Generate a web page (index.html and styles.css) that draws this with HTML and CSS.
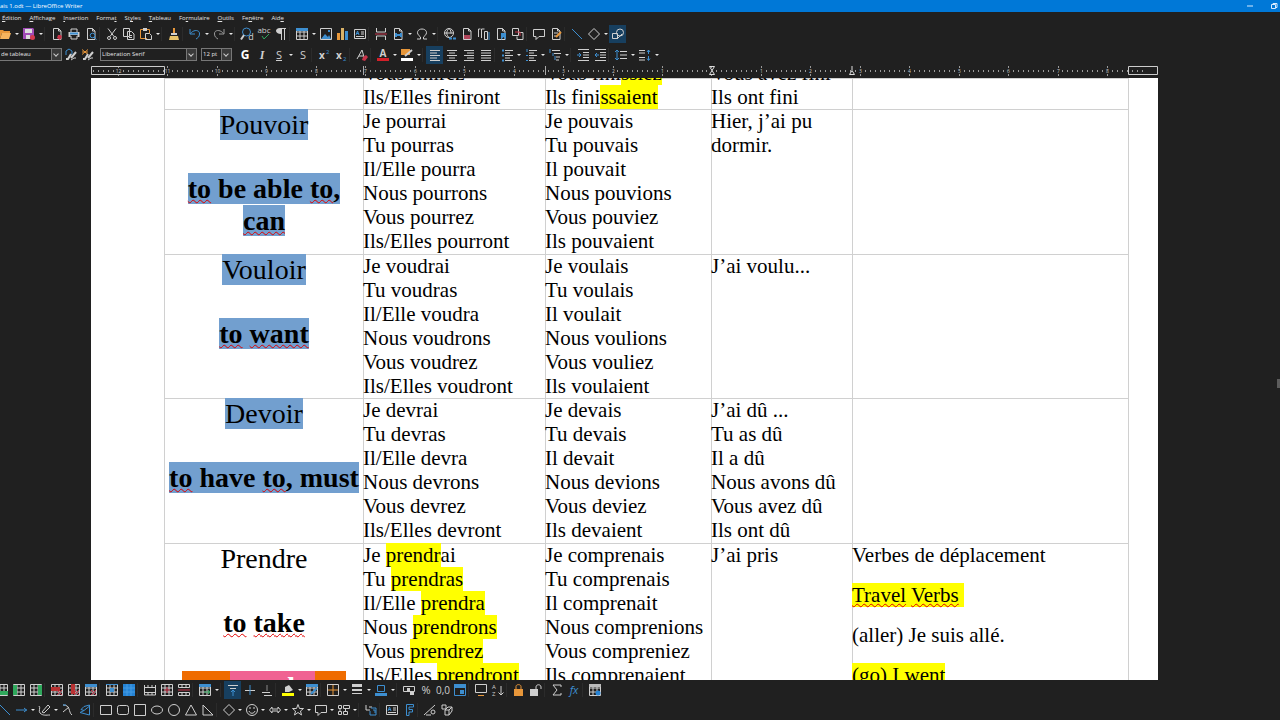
FILE: index.html
```html
<!DOCTYPE html>
<html lang="fr">
<head>
<meta charset="utf-8">
<title>ais 1.odt — LibreOffice Writer</title>
<link rel="stylesheet" href="styles.css">
</head>
<body>
<div class="app">
  <header class="titlebar">
    <span class="title">ais 1.odt — LibreOffice Writer</span>
    <button class="winbtn" aria-label="Réduire"><svg viewBox="0 0 8 8"><path d="M1 4h6" /></svg></button>
    <button class="winbtn" aria-label="Restaurer"><svg viewBox="0 0 8 8"><path d="M1.500 2.500h4v4h-4zM3 2.500v-1h4v4h-1" /></svg></button>
  </header>
  <nav class="menubar">
    <button><u>É</u>dition</button><button><u>A</u>ffichage</button><button><u>I</u>nsertion</button><button>Forma<u>t</u></button><button>St<u>y</u>les</button><button><u>T</u>ableau</button><button>Fo<u>r</u>mulaire</button><button><u>O</u>utils</button><button>Fe<u>n</u>être</button><button>Aid<u>e</u></button>
  </nav>
  <div class="toolbar main-tools" id="standard"></div>
  <div class="toolbar format-tools">
    <label class="combo style-combo"><select aria-label="Style de paragraphe"><option>de tableau</option></select></label>
    <div class="tools" id="styles"></div>
    <label class="combo font-combo"><select aria-label="Nom de police"><option>Liberation Serif</option></select></label>
    <label class="combo size-combo"><select aria-label="Taille de police"><option>12 pt</option></select></label>
    <div class="tools" id="formatting"></div>
  </div>
  <div class="ruler" id="ruler"></div>
  <main class="workspace">
    <article class="page">
      <table class="verbs">
        <colgroup><col class="c1"><col class="c2"><col class="c3"><col class="c4"><col class="c5"></colgroup>
        <tbody>
        <tr class="partial">
          <td></td>
          <td><div class="tail"><p>Vous finirez</p><p>Ils/Elles finiront</p></div></td>
          <td><div class="tail"><p>Vous fini<mark>ssiez</mark></p><p>Ils fini<mark>ssaient</mark></p></div></td>
          <td><div class="tail"><p>Vous avez fini</p><p>Ils ont fini</p></div></td>
          <td></td>
        </tr>
        <tr>
          <td class="verb"><p><span class="sel">Pouvoir</span></p><p class="blank"></p><p class="en"><span class="sel"><i>to</i> be able <i>to</i>,<br><i>can</i></span></p></td>
          <td><p>Je pourrai</p><p>Tu pourras</p><p>Il/Elle pourra</p><p>Nous pourrons</p><p>Vous pourrez</p><p>Ils/Elles pourront</p></td>
          <td><p>Je pouvais</p><p>Tu pouvais</p><p>Il pouvait</p><p>Nous pouvions</p><p>Vous pouviez</p><p>Ils pouvaient</p></td>
          <td><p>Hier, j’ai pu dormir.</p></td>
          <td></td>
        </tr>
        <tr>
          <td class="verb"><p><span class="sel">Vouloir</span></p><p class="blank"></p><p class="en"><span class="sel"><i>to</i> <i>want</i></span></p></td>
          <td><p>Je voudrai</p><p>Tu voudras</p><p>Il/Elle voudra</p><p>Nous voudrons</p><p>Vous voudrez</p><p>Ils/Elles voudront</p></td>
          <td><p>Je voulais</p><p>Tu voulais</p><p>Il voulait</p><p>Nous voulions</p><p>Vous vouliez</p><p>Ils voulaient</p></td>
          <td><p>J’ai voulu...</p></td>
          <td></td>
        </tr>
        <tr>
          <td class="verb"><p><span class="sel">Devoir</span></p><p class="blank"></p><p class="en"><span class="sel"><i>to</i> have <i>to</i>, must</span></p></td>
          <td><p>Je devrai</p><p>Tu devras</p><p>Il/Elle devra</p><p>Nous devrons</p><p>Vous devrez</p><p>Ils/Elles devront</p></td>
          <td><p>Je devais</p><p>Tu devais</p><p>Il devait</p><p>Nous devions</p><p>Vous deviez</p><p>Ils devaient</p></td>
          <td><p>J’ai dû ...</p><p>Tu as dû</p><p>Il a dû</p><p>Nous avons dû</p><p>Vous avez dû</p><p>Ils ont dû</p></td>
          <td></td>
        </tr>
        <tr>
          <td class="verb"><p>Prendre</p><p class="blank"></p><p class="en"><i>to</i> <i>take</i></p><p class="blank"></p><p class="strip"><span class="orange wide"></span><span class="pink">l</span><span class="orange">t</span></p></td>
          <td><p>Je <mark>prendr</mark>ai</p><p>Tu <mark>prendras</mark></p><p>Il/Elle <mark>prendra</mark></p><p>Nous <mark>prendrons</mark></p><p>Vous <mark>prendrez</mark></p><p>Ils/Elles <mark>prendront</mark></p></td>
          <td><p>Je comprenais</p><p>Tu comprenais</p><p>Il comprenait</p><p>Nous comprenions</p><p>Vous compreniez</p><p>Ils comprenaient</p></td>
          <td><p>J’ai pris</p></td>
          <td class="spaced"><p>Verbes de déplacement</p><p><mark><i>Travel</i> <i>Verbs</i>&nbsp;</mark></p><p>(aller) Je suis allé.</p><p><mark>(go) I went</mark></p></td>
        </tr>
        </tbody>
      </table>
    </article>
    <div class="scroll-thumb"></div>
  </main>
  <footer>
    <div class="toolbar table-tools" id="table"></div>
    <div class="toolbar draw-tools" id="drawing"></div>
  </footer>
</div>
<script src="app.js"></script>
</body>
</html>
```
FILE: styles.css
```css
* { box-sizing: border-box; }
body { margin: 0; background: #202020; color: #e4e4e4; font-family: "Open Sans", sans-serif; }
button { margin: 0; padding: 0; border: 0; background: none; color: inherit; font: inherit; }
svg { display: block; overflow: visible; }
.app { display: flex; flex-direction: column; height: 100vh; overflow: hidden; }

.titlebar { display: flex; align-items: center; height: 12px; background: #0078d7; color: #fff; gap: 16px; padding-right: 2px; flex: none; }
.title { flex: 1; font-size: 6px; line-height: 12px; }
.winbtn { width: 8px; height: 8px; }
.winbtn svg { width: 8px; height: 8px; fill: none; stroke: #d5eaff; }

.menubar { display: flex; align-items: center; gap: 8px; height: 12px; padding-left: 2px; font-size: 6px; line-height: 10px; flex: none; }
.menubar u { text-decoration-thickness: 1px; text-underline-offset: 1px; }

.toolbar { display: flex; align-items: center; flex: none; }
.tools { display: flex; align-items: center; }
.main-tools { height: 20px; margin-left: -4px; }
.format-tools { height: 21px; }
.table-tools { height: 20px; margin-left: -7px; }
.draw-tools { height: 20px; margin-left: -4px; }
.tool { width: 17px; height: 18px; display: grid; place-items: center; flex: none; }
.tool svg { width: 12px; height: 12px; }
.tool.active { background: #173f5f; }
.drop { width: 7px; height: 18px; display: grid; place-items: center; flex: none; }
.draw-tools .drop { width: 6px; }
.drop::after { content: ""; border: 2px solid transparent; border-top-color: #e8e8e8; border-bottom: 0; }
.sep { width: 4px; height: 14px; border-left: 1px solid #2b2b2b; flex: none; }

.combo { position: relative; display: block; height: 13px; border: 1px solid #777; flex: none; }
.combo select { appearance: none; width: 100%; height: 11px; margin: 0; padding: 0 10px 0 1px; border: 0; background: #202020; color: #e4e4e4; font: 6px/11px "Open Sans", sans-serif; display: block; }
.combo::before { content: ""; position: absolute; right: 0; top: 0; width: 9px; height: 11px; border-left: 1px solid #777; background: #3a3a3a; pointer-events: none; }
.combo::after { content: ""; position: absolute; right: 3px; top: 3px; width: 3px; height: 3px; border: solid #ccc; border-width: 0 1px 1px 0; transform: rotate(45deg); pointer-events: none; }
.style-combo { width: 62px; border-left: 0; }
.font-combo { width: 97px; margin-left: 4px; }
.size-combo { width: 31px; margin: 0 4px; }

.ruler { height: 13px; margin: 0 122px 0 91px; flex: none; overflow: hidden; }
.ruler svg { width: 100%; height: 13px; }
.ruler text { font: 5px "Open Sans", sans-serif; fill: #c8c8c8; text-anchor: middle; }

.workspace { flex: 1; min-height: 0; overflow: hidden; position: relative; padding: 0 122px 0 91px; }
.page { background: #fff; color: #000; min-height: 100%; padding: 0 30px 0 74px; font-family: "Liberation Serif", serif; font-size: 21px; line-height: 24px; }
.scroll-thumb { position: absolute; right: 0; top: 50%; width: 3px; height: 9px; background: #5c5c5c; }
.verbs { table-layout: fixed; width: 100%; border-spacing: 0; box-shadow: -1px 0 #d0d0d0, 1px 0 #d0d0d0; }
.c1 { width: 198px; } .c2 { width: 182px; } .c3 { width: 166px; } .c4 { width: 141px; }
.verbs td { padding: 0; vertical-align: top; height: 145px; box-shadow: inset 0 1px #d0d0d0; }
.verbs td + td { box-shadow: inset 1px 1px #d0d0d0; }
.verbs tr:nth-child(3) td { height: 144px; }
.verbs .partial td { height: 31px; }
.tail { height: 31px; overflow: hidden; display: flex; flex-direction: column; justify-content: flex-end; }
.tail p { flex: none; }
.verbs p { margin: 0; }
.verbs .spaced p { margin-bottom: 16px; }
.verbs .verb { font-size: 28px; line-height: 32px; text-align: center; }
.blank { height: 32px; }
.en { font-weight: bold; }
.sel { background: #729fcf; }
mark { background: #ff0; color: inherit; }
i { font-style: normal; text-decoration: underline wavy #e00000 1px; text-decoration-skip-ink: none; text-underline-offset: 1px; }
.strip { display: flex; justify-content: center; height: 32px; color: #fff; text-align: right; font-weight: bold; }
.orange { background: #ef6c00; width: 31px; padding-right: 20px; }
.orange.wide { width: 48px; }
.pink { background: #f06292; width: 85px; padding-right: 20px; }

footer { flex: none; }
```
FILE: app.js
```js
// Icons are drawn on a 12 by 12 grid.
const W = '#cfcfcf', B = '#3d8fd1', O = '#e8973a', R = '#c8344a', G = '#2fa85c';
const line = (d, c = W, w = 1) => `<path d="${d}" fill="none" stroke="${c}" stroke-width="${w}"/>`;
const fill = (d, c = W) => `<path d="${d}" fill="${c}"/>`;
const page = line('M2.500 .5h5l2.500 2.500v8.500h-7.500zM7.500 .5v2.500h2.500');
const grid = line('M.5 .5h11v11h-11zM.5 4h11M.5 8h11M4 .5v11M8 .5v11');
const glyph = (t, c = W, s = 11, extra = '') => `<text x="6" y="10" text-anchor="middle" font-family="Open Sans" font-size="${s}" fill="${c}" ${extra}>${t}</text>`;

const icons = {
  open: fill('M0 2h4l1 1h6v2H3L1 11H0z', O) + fill('M3 5h9l-2 6H1z', '#f6b45e'),
  save: fill('M0 0h10l1 1v10H0z', '#a04bb5') + fill('M2 1h7v4H2z', '#ddd') + fill('M3 7h4v4H3z', '#ddd') + '<circle cx="9.500" cy="9.500" r="2.500" fill="#d43b50"/>',
  pdf: page + fill('M7 7h3l1 2-2 3-3-2z', R),
  print: line('M3 4V1h6v3M3 8v3h6V8') + fill('M.5 4h11v5h-2V7h-7v2h-2z', W) + line('M2 5.500h8', B, 2),
  preview: page + '<circle cx="7.500" cy="7.500" r="2.300" fill="#202020" stroke="#3d8fd1"/>' + line('M9 9l2.500 2.500', B),
  cut: line('M2 .5l6 8M10 .5l-6 8') + '<circle cx="3" cy="10" r="1.500" fill="none" stroke="#cfcfcf"/><circle cx="9" cy="10" r="1.500" fill="none" stroke="#cfcfcf"/>',
  copy: line('M.5 .5h6v8h-6zM4.500 3.500h4l2.500 2.500v5.500h-6.500zM6 7.500h3M6 9.500h3'),
  paste: line('M7 10.500H.5v-9h9v4', O) + fill('M3 0h4v3H3z') + line('M5.500 5.500h4l2 2v4h-6z'),
  clone: line('M6 0v5', O, 2) + fill('M3 5h6v2H3z') + fill('M2 8h8l1 4H1z', '#e8c36a'),
  undo: line('M1 1v5h5M1.500 5.500C5 1 11 2 10.500 6c0 3-2 4-3.500 5', B),
  redo: line('M11 1v5H6M10.500 5.500C7 1 1 2 1.500 6c0 3 2 4 3.500 5', '#999'),
  find: '<circle cx="5.500" cy="4" r="4" fill="none" stroke="#3d8fd1"/>' + line('M3 7l-3 4.500', W, 2) + `<text x="10" y="12" text-anchor="middle" font-size="9" font-family="Open Sans" fill="${W}">d</text>`,
  spell: glyph('abc', W, 8).replace('y="10"', 'y="5"') + line('M4 8l2 3 5-5', G),
  pilcrow: fill('M6 0v6C-.5 6-.5 0 5 0z') + line('M6.500 0v12M9.500 0v12M5 .5h6'),
  table: grid + fill('M0 0h12v3H0z', B),
  image: line('M.5 .5h11v11h-11z') + fill('M1 11l4-5 3 3 1-2 2 4zM8 2h2v2H8z', B),
  chart: fill('M0 5h3v7H0z', O) + fill('M4 0h3v12H4z', '#d9b268') + fill('M8 3h3v9H8z', B),
  textbox: line('M.5 1.500h11v9h-11zM7 4h3M7 6h3M2 8.500h8') + line('M2 7l1.500-4 1.500 4M2 5.500h3', B),
  pbreak: line('M1.500 0v4h9V0M1.500 12V8h9v4') + line('M0 6h12', R),
  field: page + fill('M3 5h2v1h3V5h2v4H8V8H5v1H3z', B),
  omega: line('M1 11h3.500V9C-1 5 2 1 6 1s7 4 1.500 8v2H11'),
  link: '<circle cx="5" cy="5" r="4.500" fill="none" stroke="#cfcfcf"/>' + line('M.5 5h9M5 .5c-3 3-3 6 0 9M5 .5c2 2 2 3 2 5') + line('M5 10.500h3M9 10.500h3', B, 2),
  footnote: page + fill('M3 7h6v4H3z', '#b0455a'),
  endnote: line('M.5 1v8M3.500 1v9M3.500 1h3M.5 1h2M6.500 3.500h3v8h-3z') + line('M11 4v8', B),
  bookmark: page + fill('M6 5h5v7L8.500 9 6 12z', B),
  xref: line('M.5 .5h6v7h-6zM6 4.500h5v7H5v-3') + line('M3 4h5v4', R),
  comment: line('M.5 1.500h11v7H6l-3 3v-3H.5z'),
  track: page + line('M4 5h4M4 8h3') + line('M6 9l5-5', O, 2),
  line: line('M1 1l10 10', B),
  diamond: line('M6 .5L11.500 6 6 11.500.5 6z'),
  draw: line('M.5 5.500h5v5h-5z') + '<circle cx="8" cy="4.500" r="3.500" fill="none" stroke="#cfcfcf"/>' + line('M5 11l5-5'),
  stUpd: line('M1 6V2l3-2 3 2v3L4 7', B) + line('M1 10h2l3-5M6 9l5-6', W, 2) + line('M6 11l3-2h2'),
  stNew: line('M0 .5l6 5M6 .5l-6 5M0 3h6', O) + line('M1 10h2l3-5M6 9l5-6', W, 2) + line('M6 11l3-2h2'),
  bold: glyph('G', '#fff', 12, 'font-weight="bold"'),
  ital: glyph('I', W, 12, 'font-style="italic" font-weight="bold"').replace('Open Sans', 'Liberation Serif'),
  under: glyph('S', W, 11) + line('M3 11.500h6'),
  strike: glyph('S', W, 11),
  sup: glyph('x', W, 10, 'font-weight="bold"').replace('x="6"', 'x="4"') + `<text x="8" y="5" font-size="6" fill="${B}">2</text>`,
  sub: glyph('x', W, 10, 'font-weight="bold"').replace('x="6"', 'x="4"') + `<text x="8" y="12" font-size="6" fill="${B}">2</text>`,
  clear: line('M1 10L6 1l2 7M3 7h4', W) + fill('M7 8l3-2 2 2-3 4-3-1z', R),
  fcolor: glyph('A', W, 10, 'font-weight="bold"').replace('y="10"', 'y="8"') + fill('M0 9h12v3H0z', '#d32029'),
  hcolor: fill('M0 0h9v6H0z', O) + line('M4 7l7-6', W, 2) + fill('M0 9h12v3H0z', '#fff'),
  left: line('M1 1.500h10M1 4h7M1 6.500h10M1 9h7M1 11.500h10'),
  center: line('M1 1.500h10M3 4h6M1 6.500h10M3 9h6M1 11.500h10'),
  right: line('M1 1.500h10M4 4h7M1 6.500h10M4 9h7M1 11.500h10'),
  just: line('M1 1.500h10M1 4h10M1 6.500h10M1 9h10M1 11.500h10'),
  bullets: line('M4 1.500h8M4 4h5M4 6.500h8M4 9h5M4 11.500h7') + line('M1 1.500h2M1 6.500h2M1 11.500h2', B, 2),
  numbers: line('M4 1.500h8M4 4h5M4 6.500h8M4 9h5M4 11.500h7') + line('M2 0v3M1 6.500h2M1 11.500h2', B),
  outline: line('M3 1.500h8M5 4.500h7M7 8h4M7 11h3') + line('M1 0v4M4 4v3M6 7v4', B),
  indent: line('M1 .5h11M6 3.500h6M6 6h6M6 8.500h6M1 11.500h11') + line('M0 6h4M2 4l2 2-2 2', B),
  outdent: line('M1 .5h11M6 3.500h6M6 6h6M6 8.500h6M1 11.500h11') + line('M5 6H1M3 4L1 6l2 2', B),
  lspace: line('M5 2.500h7M5 6h7M5 9.500h7') + line('M2 1v10M0 3l2-2 2 2M0 9l2 2 2-2', B),
  pspace: line('M0 1.500h6M0 4h6M0 8.500h6M0 11h6') + line('M9.500 1v4M8 3l1.500-2 1.500 2M9.500 7v4M8 9.500l1.500 2 1.500-2', B),
  rowAbove: grid + fill('M0 7h12v4H0z', G),
  colLeft: grid + fill('M0 1h4v10H0z', G),
  colRight: grid + fill('M8 1h4v10H8z', G),
  delRow: grid + fill('M0 3h9v4H0z', '#b93232') + line('M6 6l5 5M11 6l-5 5', R),
  delCol: grid + fill('M3 0h4v10H3z', '#b93232') + line('M6 6l5 5M11 6l-5 5', R),
  delTab: grid + fill('M0 0h12v3H0z', B) + line('M6 6l5 5M11 6l-5 5', R),
  selCell: grid + fill('M4 4h4v4H4z', B) + line('M0 .5h12', B),
  selTab: fill('M0 0h12v12H0z', '#2583d5') + line('M4 0v12M8 0v12M0 4h12M0 8h12', '#459be3'),
  merge: line('M.5 1v10h11V1M.5 3.500h11M.5 8.500h11M4 1v2.500M8 1v2.500M4 8.500V11M8 8.500V11'),
  split: grid + line('M3 6h6M6 3v6', R),
  splitT: line('M.5 .5h11v3H.500zM.5 8.500h11v3H.500zM4 .5v3M8 .5v3M4 8.500v3M8 8.500v3') + line('M0 6h12', R),
  optim: grid + fill('M0 0h12v3H0z', B) + line('M5 8h6M9 6l2 2-2 2', G),
  vtop: line('M1 1.500h10M3 4.500h6') + line('M6 12V6M4 8l2-2 2 2', B),
  vmid: line('M1 6.500h10') + line('M6 1v10', B),
  vbot: line('M1 8.500h8M3 11.500h8') + line('M6 1v6', '#888'),
  bg: fill('M3 3l4-2 4 5-4 2H3z') + fill('M0 9h12v3H0z', '#ff0'),
  auto: grid + fill('M0 0h12v3H0z', B) + line('M5 10l6-6', B, 2),
  borders: line('M.5 .5h11v11H.500z') + line('M6 1v10M1 6h10', O),
  bstyle: line('M1 1.500h10', W, 3) + line('M1 6h10', W, 2) + line('M1 9.500h10', W, 1),
  bcolor: line('M2.500 1.500h7v6h-7z', B) + fill('M0 9h12v3H0z', B),
  money: line('M.5 2.500h11v5H.500z') + fill('M4 4h3v3H4zM7 8h4v3H7z'),
  percent: glyph('%', W, 11),
  decimal: glyph('0,0', W, 10),
  date: line('M.5 .5h11v11H.500z', B) + fill('M0 0h12v4H0z', B) + fill('M6 6h4v4H6z', B),
  caption: line('M.5 .5h11v8H.500z') + line('M3 11.500h6', O),
  sort: `<text x="0" y="5" font-size="6" fill="${W}">A</text><text x="0" y="12" font-size="6" fill="${W}">Z</text>` + line('M9 2v9M6.500 8.500L9 11l2.500-2.500'),
  lock: fill('M1 5h9v7H1z', O) + line('M3 5V2.500C3 0 8 0 8 2.500V5', O),
  unlock: fill('M0 5h8v7H0z') + line('M6 5V3c0-3 5-3 5 0v2'),
  sum: line('M10 3V1H2l4 5-4 5h8V9'),
  fx: glyph('fx', B, 11, 'font-style="italic"'),
  props: grid + fill('M0 0h12v3H0z', '#bbb') + '<circle cx="9" cy="9" r="2.500" fill="#2583d5"/>',
  arrow: line('M0 6h11M8 4l2.500 2L8 8', B),
  pencil: line('M0 2c2 2-1 5 1 7 3 3 6 2 10 2M3 8l6-7 2 2-6 6z'),
  conn: line('M1 1c8 0 5 7 9 10M7 3L1 8', W) + line('M1 1h3', B),
  poly: line('M5 2.500L10.500 1v10L1 8.500l4-2-3-1zM5 6.500l5-4', B),
  rect: line('M.5 1.500h11v9H.500z'),
  round: '<rect x=".5" y="1.500" width="11" height="9" rx="2" fill="none" stroke="#cfcfcf"/>',
  square: line('M.5 .5h11v11H.500z'),
  ellipse: '<ellipse cx="6" cy="6" rx="5.500" ry="4" fill="none" stroke="#cfcfcf"/>',
  circle: '<circle cx="6" cy="6" r="5.500" fill="none" stroke="#cfcfcf"/>',
  tri: line('M6 1l5.500 10H.500z'),
  rtri: line('M1 1l10 10H1z'),
  smile: '<circle cx="6" cy="6" r="5.500" fill="none" stroke="#cfcfcf"/>' + line('M3 7c1 3 5 3 6 0M4 3v2M8 3v2'),
  dblarrow: line('M.5 6L3 3v2h6V3l2.500 3L9 9V7H3v2z'),
  star: line('M6 .5l1.500 4h4L8.500 7l1 4L6 8.500 2.500 11l1-4L.5 4.500h4z'),
  flow: line('M.5 1.500h3v3h-3zM.5 7.500h3v3h-3zM5.500 1.500h6v3h-6zM5.500 7.500h4v3h-4zM2 4v3M7.500 4v3'),
  callout: line('M1 1v5h4M4 3h3') + line('M6 4h5v7H5V7M8 6h2v3', B),
  fontwork: line('M3.500 11.500V.5h7v2.500H6v2.500h3.500V8H6v3.500z', B),
  edit: line('M0 11L11 1M2 11h5') + '<circle cx="9" cy="8" r="2" fill="none" stroke="#cfcfcf"/>',
  extrude: line('M1 1h4v4H1zM4 6l3-3h4v4l-3 4H4zM4 6h4v5M8 6l3-3')
};

// "v" adds a drop-down arrow, "|" a separator, "*" marks an active tool.
const bars = {
  standard: 'open v save v | pdf print preview | cut copy paste v | clone | undo v redo v | find spell pilcrow | table v image chart textbox | pbreak field v omega v | link footnote endnote bookmark xref | comment track | line diamond v draw*',
  styles: 'stUpd stNew',
  formatting: 'bold ital under v strike | sup sub | clear | fcolor v hcolor v | left* center right just | bullets v numbers v outline v | indent outdent | lspace v pspace v',
  table: 'rowAbove colLeft colRight | delRow delCol delTab | selCell selTab | merge split splitT | optim v | vtop* vmid vbot | bg v auto | borders v bstyle v bcolor v | money percent decimal date | caption sort | lock unlock | sum fx | props',
  drawing: 'line arrow v pencil v conn poly | rect round square ellipse circle tri rtri | diamond v smile v dblarrow v star v comment v flow v | callout | textbox fontwork | edit extrude'
};

for (const [id, items] of Object.entries(bars)) {
  document.getElementById(id).innerHTML = items.split(' ').map(item => {
    if (item === '|') return '<span class="sep"></span>';
    if (item === 'v') return '<button class="drop" aria-label="Options"></button>';
    const name = item.replace('*', '');
    return `<button class="tool${item.endsWith('*') ? ' active' : ''}" aria-label="${name}"><svg viewBox="0 0 12 12">${icons[name]}</svg></button>`;
  }).join('');
}

const pitch = 49.45;
let marks = '';
for (let i = -5; i < 208; i++) {
  const x = Math.round(27 + i * pitch / 10) + 0.5;
  if (x < 2 || x > 1064) continue;
  if (i % 10) marks += `<path d="M${x} 5v2" stroke="#9a9a9a"/>`;
  else {
    const n = Math.abs(12 - i / 10);
    marks += `<path d="M${x} 1v2M${x} 9v2" stroke="#9a9a9a"/>`;
    if (n) marks += `<text x="${x}" y="8">${n}</text>`;
  }
}
const margins = '<path d="M.5 1.500h73v8H.500zM1037.500 1.500h29v8h-29z" fill="none" stroke="#ccc"/>';
const stops = [272.5, 454.5].map(x => `<path d="M${x} 1v9" stroke="#aaa"/>`).join('');
const indents = '<path d="M618.500 1.500h5l-5 8h5zM758.500 9.500h5l-2.500-4zM761 1v4" fill="none" stroke="#ddd"/>';
document.getElementById('ruler').innerHTML = `<svg>${marks}${margins}${stops}${indents}</svg>`;
```
